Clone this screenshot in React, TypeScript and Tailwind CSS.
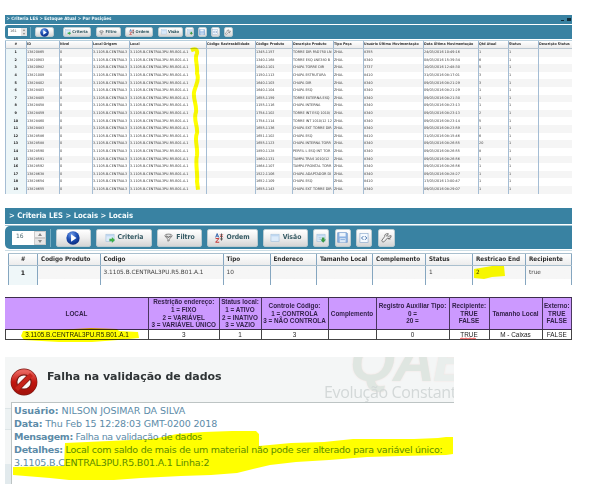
import React from 'react';

const PlayIcon = ({ cls }: { cls: string }) => (
  <svg viewBox="0 0 16 16" className={cls}>
    <defs>
      <radialGradient id="play" cx="0.4" cy="0.25" r="0.8">
        <stop offset="0" stopColor="#6f9be8" />
        <stop offset="0.5" stopColor="#1d4fb4" />
        <stop offset="1" stopColor="#0a2a7c" />
      </radialGradient>
    </defs>
    <circle cx="8" cy="8" r="7.6" fill="url(#play)" />
    <path d="M5.8 3.8 L12 8 L5.8 12.2 Z" fill="#fff" />
  </svg>
);
const WindowShape = () => (
  <>
    <rect x="1.5" y="2" width="13" height="11.5" fill="#dcebfa" stroke="#a3bfdc" />
    <path d="M2 4.4h12" stroke="#b5d0ef" strokeWidth="1.6" />
  </>
);
const WindowIcon = ({ cls }: { cls: string }) => (
  <svg viewBox="0 0 16 16" className={cls}><WindowShape /></svg>
);
const CriteriaIcon = ({ cls }: { cls: string }) => (
  <svg viewBox="0 0 16 16" className={cls}>
    <WindowShape />
    <path d="M7 9h4V6.5l5 4.7-5 4.6V13H7z" fill="#3fae48" />
  </svg>
);
const FilterIcon = ({ cls }: { cls: string }) => (
  <svg viewBox="0 0 16 16" className={cls} fill="none" stroke="#666" strokeWidth="1.3">
    <ellipse cx="8" cy="4.5" rx="6.3" ry="2.6" fill="#e4e4e4" />
    <path d="M1.8 5.5 6.8 11v3.5l2.6-1V11l4.9-5.5M4.5 4.5l3 4 4-4" />
  </svg>
);
const SortIcon = ({ cls }: { cls: string }) => (
  <svg viewBox="0 0 16 18" className={cls} fill="none" strokeWidth="1.8">
    <path d="M1 8 3.8 1 6.6 8M2 5.7h3.7" stroke="#3a69ae" />
    <path d="M1 10h6L1 16.6h6.5" stroke="#c43535" />
    <path d="M9 2.5l5 5M14 2.5l-5 5" stroke="#c43535" />
    <path d="M11.6 1v12" stroke="#555" />
    <path d="M8.8 10h5.6l-2.8 4z" fill="#555" />
  </svg>
);
const ExportIcon = ({ cls }: { cls: string }) => (
  <svg viewBox="0 0 16 16" className={cls}>
    <WindowShape />
    <path d="M4 7.5h5M4 10h5" stroke="#9db7d4" />
    <path d="M9.5 7h4v3.5H16l-4.500 5-4.500-5h2.500z" fill="#3c9a44" />
  </svg>
);
const SaveIcon = ({ cls }: { cls: string }) => (
  <svg viewBox="0 0 16 16" className={cls}>
    <path d="M1 1h13l1 1v13H1z" fill="#8db3e3" stroke="#6b95cb" />
    <path d="M3.500 1.500h9v5h-9z" fill="#eef5fc" />
    <path d="M4 9h8.500v6H4z" fill="#dbe8f7" />
    <path d="M5 11h6.500" stroke="#6d9bd6" />
  </svg>
);
const CodeIcon = ({ cls }: { cls: string }) => (
  <svg viewBox="0 0 16 16" className={cls} fill="none">
    <rect x="1.500" y="1" width="13" height="14" fill="#f5faff" stroke="#88a7cc" />
    <path d="M7 5 4 8l3 3M9.500 5l3 3-3 3" stroke="#3d6ba5" strokeWidth="1.5" />
  </svg>
);
const WrenchIcon = ({ cls }: { cls: string }) => (
  <svg viewBox="0 0 18 16" className={cls} fill="none" stroke="#4f4f4f" strokeWidth="1.2">
    <path d="M1.500 12.5 6 6.5C5.500 3 8 1.300 12 1.800l-1.500 2.700 1.500 1.500 4.500-1c.5 3.500-2.500 5.500-6 4l-5 5.500c-1.500 1.500-5 .5-4-2z" fill="#f1f1f1" />
    <path d="M8 4.500l2.500 2M11.500 10l4 .500" />
  </svg>
);

const icons = {
  play: PlayIcon, criteria: CriteriaIcon, filter: FilterIcon, sort: SortIcon, window: WindowIcon,
  export: ExportIcon, save: SaveIcon, code: CodeIcon, wrench: WrenchIcon,
};
type Btn = { icon: keyof typeof icons; label?: string; box: string; ic: string };

const Button = ({ b, text }: { b: Btn; text: string }) => {
  const Icon = icons[b.icon];
  return (
    <div className={`flex shrink-0 items-center justify-center rounded-[2px] border border-[#bccbd0] bg-linear-to-b from-white via-[#eeeeee] to-[#d5d5d5] ${b.box}`}>
      <Icon cls={`shrink-0 ${b.ic}`} />
      {b.label && <span className={`font-bold whitespace-nowrap text-[#345963] ${text}`}>{b.label}</span>}
    </div>
  );
};

const smallButtons: Btn[] = [
  { icon: 'play', box: 'w-[19px] ml-[4px]', ic: 'size-[9px]' },
  { icon: 'criteria', label: 'Criteria', box: 'w-[28px] ml-[8.5px]', ic: 'size-[6px]' },
  { icon: 'filter', label: 'Filtro', box: 'w-[25px] ml-[5px]', ic: 'size-[5px]' },
  { icon: 'sort', label: 'Ordem', box: 'w-[28px] ml-[4.5px]', ic: 'size-[6px]' },
  { icon: 'window', label: 'Visão', box: 'w-[25px] ml-[4.5px]', ic: 'size-[6px]' },
  { icon: 'export', box: 'w-[9px] ml-[2.500px]', ic: 'size-[6px]' },
  { icon: 'save', box: 'w-[9px] ml-[3.5px]', ic: 'size-[6px]' },
  { icon: 'code', box: 'w-[9px] ml-[4px]', ic: 'size-[6px]' },
  { icon: 'wrench', box: 'w-[9px] ml-[4px]', ic: 'size-[6px]' },
];
const largeButtons: Btn[] = [
  { icon: 'play', box: 'w-[35px] ml-[4.5px]', ic: 'size-[14px]' },
  { icon: 'criteria', label: 'Criteria', box: 'w-[56px] ml-[5.5px]', ic: 'size-[10px] mr-[3px]' },
  { icon: 'filter', label: 'Filtro', box: 'w-[45px] ml-[5px]', ic: 'size-[9px] mr-[3px]' },
  { icon: 'sort', label: 'Ordem', box: 'w-[51px] ml-[5px]', ic: 'w-[9px] h-[10px] mr-[2px]' },
  { icon: 'window', label: 'Visão', box: 'w-[45px] ml-[5px]', ic: 'size-[10px] mr-[3px]' },
  { icon: 'export', box: 'w-[16px] ml-[5px]', ic: 'size-[10px]' },
  { icon: 'save', box: 'w-[16px] ml-[5.500px]', ic: 'size-[11px]' },
  { icon: 'code', box: 'w-[16px] ml-[5.500px]', ic: 'size-[10px]' },
  { icon: 'wrench', box: 'w-[17px] ml-[5.500px]', ic: 'size-[11px]' },
];

const cols1 = [
  { t: '#', w: 'w-[20.5px]' }, { t: 'ID', w: 'w-[33px]' }, { t: 'Nivel', w: 'w-[33px]' },
  { t: 'Local Origem', w: 'w-[37px]' }, { t: 'Local', w: 'w-[77px]' },
  { t: 'Código Rastreabilidade', w: 'w-[49px]' }, { t: 'Código Produto', w: 'w-[37px]' },
  { t: 'Descrição Produto', w: 'w-[41px]' }, { t: 'Tipo Peça', w: 'w-[30px]' },
  { t: 'Usuário Última Movimentação', w: 'w-[60px]' }, { t: 'Data Última Movimentação', w: 'w-[55px]' },
  { t: 'Qtd Atual', w: 'w-[30px]' }, { t: 'Status', w: 'w-[30px]' }, { t: 'Descrição Status', w: 'w-[34.5px]' },
];
const data1: string[][] = [
  ['13820865', '1345-1157', 'TORRE DIR PAD750 LN', '8355', '24/03/2016 10:49:16', '1'],
  ['13820903', '1340-1168', 'TORRE ESQ LNE380 B', '8340', '08/03/2016 15:39:34', '6'],
  ['13820982', '1640-1101', 'CHAPA TORRE DIR', '3737', '10/03/2016 12:48:30', '5'],
  ['13821009', '1150-1113', 'CHAPA ESTRUTURA', '8410', '31/03/2016 08:17:01', '3'],
  ['13828402', '1640-1103', 'CHAPA DIR', '8340', '09/03/2016 08:21:29', '3'],
  ['13828403', '1640-1104', 'CHAPA ESQ', '8340', '09/03/2016 08:21:29', '1'],
  ['13828405', '1655-1159', 'TORRE EXTERNA ESQ', '8340', '09/03/2016 08:21:30', '1'],
  ['13828458', '1155-1116', 'CHAPA INTERNA', '8340', '09/03/2016 08:23:13', '1'],
  ['13828459', '1754-1102', 'TORRE INT ESQ 1010/', '8340', '09/03/2016 08:23:13', '2'],
  ['13828460', '1754-1114', 'TORRE INT 1010/12 12', '8340', '09/03/2016 08:23:14', '5'],
  ['13828483', '1655-1136', 'CHAPA EXT TORRE DIR', '8340', '09/03/2016 08:23:59', '1'],
  ['13828586', '1651-1102', 'CHAPA ESQ', '8410', '31/03/2016 08:15:46', '6'],
  ['13828588', '1655-1123', 'CHAPA INTERNA TORR', '8340', '09/03/2016 08:26:55', '20'],
  ['13828590', '1850-1128', 'PERFIL L ESQ INT TOR', '8340', '09/03/2016 08:26:55', '8'],
  ['13828591', '1860-1131', 'TAMPA TRAS 1010/12', '8340', '09/03/2016 08:26:56', '1'],
  ['13828592', '1864-1107', 'TAMPA FRONTAL TORR', '8340', '09/03/2016 08:26:56', '1'],
  ['13828638', '1522-1106', 'CHAPA ADAPTADOR DI', '8340', '09/03/2016 08:28:27', '1'],
  ['13828654', '1652-1109', 'CHAPA ESQ', '8410', '17/03/2016 13:00:47', '1'],
  ['13828655', '1655-1143', 'CHAPA EXT TORRE DIR', '8340', '09/03/2016 08:29:07', '1'],
];

const cols2 = [
  { t: '#', w: 'w-[29px]', v: '1' }, { t: 'Codigo Produto', w: 'w-[62.5px]', v: '' },
  { t: 'Codigo', w: 'w-[123px]', v: '3.1105.B.CENTRAL3PU.R5.B01.A.1' }, { t: 'Tipo', w: 'w-[47px]', v: '10' },
  { t: 'Endereco', w: 'w-[46.5px]', v: '' }, { t: 'Tamanho Local', w: 'w-[56px]', v: '' },
  { t: 'Complemento', w: 'w-[53px]', v: '' }, { t: 'Status', w: 'w-[47px]', v: '1' },
  { t: 'Restricao End', w: 'w-[53px]', v: '2' }, { t: 'Recipiente', w: 'w-[47px] border-r', v: 'true' },
];
const cols3 = [
  { h: ['LOCAL'], v: '3.1105.B.CENTRAL3PU.R5.B01.A.1', w: 'w-[144px]' },
  { h: ['Restrição endereço:', '1 = FIXO', '2 = VARIÁVEL', '3 = VARIÁVEL ÚNICO'], v: '3', w: 'w-[70.5px]' },
  { h: ['Status local:', '1 = ATIVO', '2 = INATIVO', '3 = VAZIO'], v: '1', w: 'w-[42px]' },
  { h: ['Controle Código:', '1 = CONTROLA', '3 = NÃO CONTROLA'], v: '3', w: 'w-[67px]' },
  { h: ['Complemento'], v: '', w: 'w-[48px]' },
  { h: ['Registro Auxiliar Tipo:', '0 =', '20 ='], v: '0', w: 'w-[73px]' },
  { h: ['Recipiente:', 'TRUE', 'FALSE'], v: 'TRUE', w: 'w-[40px]' },
  { h: ['Tamanho Local'], v: 'M - Caixas', w: 'w-[53px]' },
  { h: ['Externo:', 'TRUE', 'FALSE'], v: 'FALSE', w: 'w-[29.5px]' },
];

const StockPanel = () => (
  <section className="relative ml-[5px] h-[179px] w-[567px] overflow-hidden text-[3.4px] leading-none">
    <div className="flex h-[9px] items-center justify-between bg-[#3982a2] pr-[1px] pl-[1.5px]">
      <span className="font-['DejaVu_Sans_Condensed'] text-[4.5px] font-bold whitespace-nowrap text-[#f3fafc]">&gt; Criteria LES &gt; Estoque Atual &gt; Por Posições</span>
      <span className="flex items-end gap-[3px]">
        <i className="h-px w-[3px] bg-[#102c38]" /><i className="h-[3px] w-[4px] border border-[#102c38] bg-[#102c38]" />
      </span>
    </div>
    <div className="mt-px flex h-[14px] items-center rounded-l-[3px] bg-[#3982a2] pl-[3px]">
      <div className="flex h-[8px] w-[19px] bg-white">
        <span className="pt-[1.5px] pl-[2px] text-[3.6px] text-[#666]">161</span>
        <span className="ml-auto flex w-[6px] flex-col items-center justify-between bg-[#e3e3e3] py-px text-[#888]">
          <i className="border-x-[1.5px] border-b-2 border-x-transparent border-b-[#888]" />
          <i className="border-x-[1.5px] border-t-2 border-x-transparent border-t-[#888]" />
        </span>
      </div>
      <i className="ml-[3px] h-[11px] w-px bg-[#6fa9c0]" />
      <div className="flex h-[10px]">
        {smallButtons.map((b, i) => <Button key={i} b={b} text="font-['DejaVu_Sans_Condensed'] text-[4.1px] ml-px" />)}
      </div>
    </div>
    <div className="mt-px h-px bg-[#b9d0dd]" />
    <div className="flex h-[8px] border-b border-[#b9c6d0] bg-linear-to-b from-white to-[#ececec]">
      {cols1.map((c, i) => (
        <div key={c.t} className={`flex shrink-0 items-center overflow-hidden border-l border-[#9cb7d0] font-bold whitespace-nowrap text-[#333] ${i ? 'pl-[0.5px]' : 'justify-center'} ${c.w}`}>
          <span className="font-['DejaVu_Sans_Condensed'] text-[3.6px]">{c.t}</span>
        </div>
      ))}
    </div>
    {data1.map((r, n) => {
      const cells = [String(n + 1), r[0], '0', '3.1105.B.CENTRAL3', '3.1105.B.CENTRAL3PU.R5.B01.A.1', '', r[1], r[2], 'ZHAL', r[3], r[4], r[5], '1', ''];
      return (
        <div key={n} className={`flex h-[7.62px] ${n % 2 ? 'bg-white' : 'bg-[#f5f5f5]'}`}>
          {cells.map((t, i) => (
            <div key={i} className={`flex shrink-0 items-center overflow-hidden border-l border-[#a5bdd4] whitespace-nowrap ${cols1[i].w} ${i ? 'pl-[0.5px] text-[#3c3c3c]' : 'justify-center bg-[#edf6f8] font-bold text-[#222]'}`}>{t}</div>
          ))}
        </div>
      );
    })}
    <div className="h-px bg-[#a8bed0]" />
    <svg viewBox="0 0 14 144" preserveAspectRatio="none" className="absolute top-[29px] left-[184px] h-[151px] w-[14px] mix-blend-multiply" fill="none">
      <path d="M2 6Q9 3 8 9C5 13 9 20 8 28C11 35 6 40 5 46C4 53 8 58 7 65C4 72 9 78 8 85C5 91 9 98 8 106C6 114 9 123 8 131L9 139" stroke="#ff0" strokeWidth="4" strokeLinejoin="round" />
    </svg>
  </section>
);

const LocationsPanel = () => (
  <section className="mt-[14px] ml-[5px] h-[77px] w-[567px] overflow-hidden leading-none">
    <div className="flex h-[16px] items-center bg-[#3982a2] pl-[4px]">
      <span className="font-['DejaVu_Sans_Condensed'] text-[7.7px] font-bold whitespace-nowrap text-[#f5fbfd]">&gt; Criteria LES &gt; Locais &gt; Locais</span>
    </div>
    <div className="mt-px h-px bg-[#9fc3d2]" />
    <div className="flex h-[23px] items-center rounded-l-[5px] bg-[#3982a2] pl-[7px]">
      <div className="flex h-[14px] w-[34px] bg-white">
        <span className="pt-[2px] pl-[4px] text-[6px] text-[#4c6972]">16</span>
        <span className="ml-auto flex w-[12px] flex-col">
          <span className="flex flex-1 items-center justify-center border border-[#ccc] bg-[#f0f0f0]"><i className="border-x-2 border-b-[3px] border-x-transparent border-b-[#888]" /></span>
          <span className="flex flex-1 items-center justify-center border border-[#ccc] bg-[#e5e5e5]"><i className="border-x-2 border-t-[3px] border-x-transparent border-t-[#888]" /></span>
        </span>
      </div>
      <i className="ml-[4px] h-[18px] w-px bg-[#75adc3]" />
      <div className="flex h-[18px]">
        {largeButtons.map((b, i) => <Button key={i} b={b} text="font-['DejaVu_Sans_Condensed'] text-[6.8px]" />)}
      </div>
    </div>
    <div className="mt-px h-px bg-[#cbdde5]" />
    <div className="ml-[3px]">
      <div className="mt-[2px] flex h-[13px] border-y border-[#a9bfce] bg-linear-to-b from-white to-[#ececec]">
        {cols2.map((c, i) => (
          <div key={c.t} className={`flex shrink-0 items-center overflow-hidden border-l border-[#85a6c0] font-['DejaVu_Sans_Condensed'] text-[6.3px] font-bold whitespace-nowrap text-[#2e2e2e] ${c.w} ${i ? 'pl-[3px]' : 'justify-center'}`}>{c.t}</div>
        ))}
      </div>
      <div className="flex h-[19px] bg-linear-to-b from-[#f6f6f6] from-70% to-white to-70%">
        {cols2.map((c, i) => (
          <div key={c.t} className={`flex shrink-0 border-l border-[#85a6c0] pt-[4px] whitespace-nowrap ${c.w} ${i ? 'pl-[3px] text-[5.8px] text-[#444]' : 'justify-center bg-[#eff7f9] text-[6.2px] font-bold text-[#222]'}`}>
            {c.t === 'Restricao End' ? (
              <span className="relative">
                {c.v}
                <svg viewBox="0 0 31 13" className="absolute -top-[4px] -left-[2px] h-[13px] w-[31px] mix-blend-multiply"><path d="M0 3 18 0h12l1 10-13 1-8 2-10-1z" fill="#ff0" /></svg>
              </span>
            ) : c.v}
          </div>
        ))}
      </div>
    </div>
  </section>
);

const MappingTable = () => (
  <section className="relative mt-[12px] ml-[5px] h-[43px] w-[567px] font-['Liberation_Sans',Arial,sans-serif] text-[#222]">
    <div className="flex h-[33px] border-y border-[#3d2d4b] bg-[#cc99ff]">
      {cols3.map((c, i) => (
        <div key={i} className={`flex shrink-0 flex-col items-center justify-center border-r border-[#4b3760] text-[6.35px] leading-[7.6px] font-bold whitespace-nowrap text-[#33214a] ${c.w}`}>
          {c.h.map((t) => <span key={t}>{t}</span>)}
        </div>
      ))}
    </div>
    <div className="flex h-[10px] border-b border-[#444]">
      {cols3.map((c, i) => (
        <div key={i} className={`flex shrink-0 items-center justify-center border-r border-[#444] pt-px text-[6.4px] leading-none whitespace-nowrap ${i === 0 ? 'border-l' : ''} ${c.w}`}>
          {c.v === 'TRUE' ? (
            <span className="relative">
              {c.v}
              <svg viewBox="0 0 16 3" className="absolute -bottom-[2px] left-0 h-[3px] w-[16px]" fill="none"><path d="M0 2 2 1 4 2 6 1 8 2 10 1 12 2 14 1 16 2" stroke="#e22" strokeWidth="0.8" /></svg>
            </span>
          ) : <span>{c.v}</span>}
        </div>
      ))}
    </div>
    <svg viewBox="0 0 119 15" className="absolute top-[31px] left-[16px] h-[15px] w-[119px] mix-blend-multiply">
      <path d="M2 3 35 2 70 0 96 1 98 3 117 4 118 10 97 12 71 14 38 14 3 12 0 8z" fill="#ff0" />
    </svg>
  </section>
);

const ErrorDialog = () => (
  <section className="relative mt-[17px] ml-[5px] flex h-[127px] w-[449px] flex-col overflow-hidden bg-[#f4f6f6]">
    <div className="relative flex h-[45px] shrink-0 items-start pl-[5px]">
      <svg viewBox="0 0 28 28" className="mt-[11px] size-[28px]">
        <defs><linearGradient id="stop" x1="0" y1="0" x2="0" y2="1"><stop offset="0" stopColor="#e8625b" /><stop offset="0.500" stopColor="#c2160f" /><stop offset="1" stopColor="#a6120b" /></linearGradient></defs>
        <circle cx="14" cy="14" r="10" fill="#fafafa" stroke="#7b1a15" strokeWidth="6.800" />
        <path d="M7.500 20.500 20.500 7.500" stroke="#7b1a15" strokeWidth="5.4" />
        <circle cx="14" cy="14" r="10.3" fill="none" stroke="url(#stop)" strokeWidth="5" />
        <path d="M6.500 21.500 21.500 6.500" stroke="#c6241b" strokeWidth="4.200" />
      </svg>
      <h1 className="mt-[13px] ml-[9px] text-[11px] leading-[14px] font-bold tracking-[-0.03px] whitespace-nowrap text-[#2f3436]">Falha na validação de dados</h1>
      <div className="absolute top-0 right-0 h-[45px] w-[130px] overflow-hidden font-['Open_Sans',sans-serif] whitespace-nowrap">
        <span className="absolute -top-[26px] left-[26px] font-['Liberation_Sans',sans-serif] text-[58px] leading-[60px] font-bold tracking-[-2px] text-[#dfe6e1] italic [text-shadow:0_0_2px_#f3dfdc]">QA<span className="text-[#e9eeec]">E</span></span>
        <span className="absolute top-[26px] left-[0px] text-[16px] leading-[18px] tracking-[-0.35px] text-[#d3d8d8]">Evolução Constant</span>
      </div>
    </div>
    <div className="flex h-[82px]">
      <div className="flex w-[6px] shrink-0 flex-col"><i className="h-[6px]" /><i className="h-[22px] border-y border-[#dde5e7] bg-[#edf2f3]" /><i className="h-[34px]" /><i className="flex-1 bg-[#e2eaed]" /></div>
      <div className="relative min-w-0 flex-1 border-t border-l border-[#bdc4c4] bg-white pt-px pl-[2px] text-[9.5px] leading-[13px] whitespace-nowrap text-[#5c8ba8]">
        <p className="tracking-[-0.03px]"><b>Usuário:</b> NILSON JOSIMAR DA SILVA</p>
        <p className="tracking-[-0.15px]"><b>Data:</b> Thu Feb 15 12:28:03 GMT-0200 2018</p>
        <p className="tracking-[-0.31px]"><b>Mensagem:</b> Falha na validação de dados</p>
        <p className="tracking-[-0.26px]"><b>Detalhes:</b> Local com saldo de mais de um material não pode ser alterado para variável único:</p>
        <p className="tracking-[-0.17px]">3.1105.B.CENTRAL3PU.R5.B01.A.1 Linha:2</p>
        <svg viewBox="0 0 443 82" className="absolute -top-px -left-px h-[82px] w-[443px] mix-blend-multiply">
          <path d="M54 41 142 37 166 32 193 30 221 29 245 29 248 32 248 44 280 41 313 40 342 37 403 37 427 36 435 35 442 35V52L435 53 390 54 356 55 318 58 285 60 259 63 242 67 226 71 200 73 170 74 130 76 103 78 58 78 39 76 2 73 2 65 53 64z" fill="#ff0" />
        </svg>
      </div>
    </div>
  </section>
);

export default function App() {
  return (
    <main className="h-[496px] w-[595px] overflow-hidden bg-white pt-[15px] font-['DejaVu_Sans',Verdana,sans-serif]">
      <StockPanel />
      <LocationsPanel />
      <MappingTable />
      <ErrorDialog />
    </main>
  );
}
